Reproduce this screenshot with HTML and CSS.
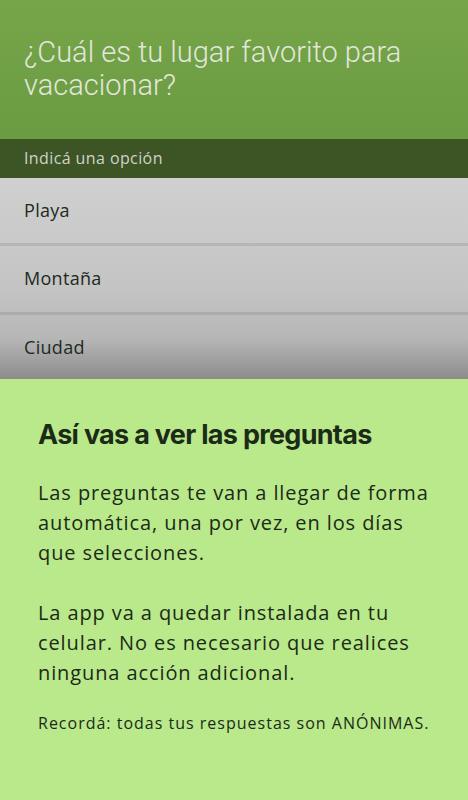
FILE: index.html
```html
<!DOCTYPE html>
<html lang="es">
<head>
  <meta charset="UTF-8">
  <meta name="viewport" content="width=device-width, initial-scale=1.0">
  <title>Pregunta</title>
  <link rel="stylesheet" href="styles.css">
</head>
<body>
  <div class="screen">
    <header class="question">
      <h1>¿Cuál es tu lugar favorito para vacacionar?</h1>
    </header>
    <div class="hint">Indicá una opción</div>
    <ul class="options">
      <li class="option">Playa</li>
      <li class="option">Montaña</li>
      <li class="option">Ciudad</li>
    </ul>
    <section class="sheet">
      <h2>Así vas a ver las preguntas</h2>
      <p>Las preguntas te van a llegar de forma automática, una por vez, en los días que selecciones.</p>
      <p class="last">La app va a quedar instalada en tu celular. No es necesario que realices ninguna acción adicional.</p>
      <p class="note">Recordá: todas tus respuestas son ANÓNIMAS.</p>
    </section>
  </div>
</body>
</html>
```

FILE: styles.css
```css
body {
  margin: 0;
  padding: 0;
  font-family: "Open Sans", "Liberation Sans", sans-serif;
}

.screen {
  width: 468px;
  height: 800px;
  display: flex;
  flex-direction: column;
  overflow: hidden;
}

.question {
  height: 139px;
  box-sizing: border-box;
  padding: 36px 24px 0;
  background: linear-gradient(#76a549, #6b9b42);
}

.question h1 {
  margin: 0;
  font-family: Roboto, sans-serif;
  font-weight: 300;
  font-size: 29px;
  line-height: 33px;
  color: #e3e6dd;
}

.hint {
  height: 39px;
  box-sizing: border-box;
  padding: 8px 24px 0;
  background: #3d5524;
  color: #cfd2cb;
  font-size: 16px;
  letter-spacing: 0.4px;
}

.options {
  list-style: none;
  margin: 0;
  padding: 0;
  height: 201px;
  display: flex;
  flex-direction: column;
  background: linear-gradient(#d0d0d0 0%, #c4c4c4 55%, #b6b6b6 80%, #8c8c8c 100%);
}

.option {
  height: 68px;
  box-sizing: border-box;
  padding: 20px 24px 0;
  font-size: 18px;
  letter-spacing: 0.3px;
  color: #1d2a1d;
  border-bottom: 3px solid rgba(0, 0, 0, 0.09);
}

.option + .option {
  height: 69px;
}

.option:last-child {
  flex: 1;
  border-bottom: none;
}

.sheet {
  flex: 1;
  background: #b9e98a;
  padding: 39px 38px 0;
  color: #1c2a18;
}

.sheet h2 {
  margin: 0 0 26px;
  font-family: Inter, sans-serif;
  font-size: 27px;
  font-weight: 700;
  letter-spacing: -0.7px;
  line-height: 34px;
}

.sheet p {
  margin: 0 0 30px;
  font-size: 20px;
  letter-spacing: 0.9px;
  line-height: 30px;
}

.sheet p.last {
  margin-bottom: 25px;
}

.sheet .note {
  font-size: 16px;
  line-height: 20px;
  letter-spacing: 1px;
  margin: 0;
}
```
